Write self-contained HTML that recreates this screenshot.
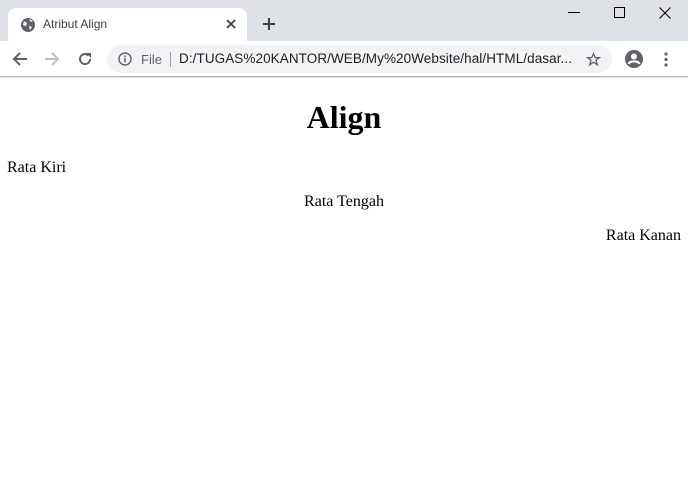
<!DOCTYPE html>
<html><head><meta charset="utf-8"><style>
*{box-sizing:border-box}
html,body{margin:0;padding:0;width:688px;height:488px;overflow:hidden;background:#fff}
#chrome{position:absolute;left:0;top:0;width:688px;height:78px;background:#dee1e6;font-family:"Liberation Sans",sans-serif}
.tab{position:absolute;left:8px;top:8px;width:239px;height:34px;background:#fff;border-radius:8px 8px 0 0}
.tab .t{position:absolute;left:35px;top:9px;font-size:12px;color:#3c4043}
.toolbar{position:absolute;left:0;top:41px;width:688px;height:36px;background:#fff;border-bottom:1px solid #b6b6b6}
.omni{position:absolute;left:107px;top:4px;width:505px;height:28px;background:#f1f3f4;border-radius:14px}
.omni .f{position:absolute;left:34px;top:7px;font-size:13px;color:#5f6368}
.omni .sep{position:absolute;left:63px;top:7px;width:1px;height:15px;background:#9aa0a6}
.omni .u{position:absolute;left:72px;top:6px;font-size:13.5px;color:#202124;letter-spacing:0.08px}
svg{position:absolute}
#page{position:absolute;top:79px;left:-1px;width:690px;font-family:"Liberation Serif",serif;color:#000}
#page .b{margin:8px}
h1{font-size:32px;margin:21.44px 0;text-align:center;line-height:37px;position:relative;top:-1px}
p{font-size:16px;margin:16px 0;line-height:18px}
</style></head><body>
<div id="chrome">
 <div class="tab">
  <svg style="left:12px;top:9px" width="16" height="16" viewBox="0 0 16 16"><circle cx="8" cy="8" r="7" fill="#5f6368"/><path d="M4 4 L7 6 L6 9 L3 8Z M9 9 L12 10 L10 13 Z M9 2 L11 5 L13 4" fill="#fff"/></svg>
  <div class="t">Atribut Align</div>
  <svg style="left:218px;top:11px" width="10" height="10" viewBox="0 0 10 10"><path d="M1 1L9 9M9 1L1 9" stroke="#3c4043" stroke-width="1.8"/></svg>
 </div>
 <svg style="left:262px;top:17px" width="14" height="14" viewBox="0 0 14 14"><path d="M7 1V13M1 7H13" stroke="#3c4043" stroke-width="2"/></svg>
 <svg style="left:568px;top:12px" width="12" height="2"><rect width="12" height="1" fill="#000"/></svg>
 <svg style="left:614px;top:7px" width="11" height="11"><rect x="0.5" y="0.5" width="10" height="10" fill="none" stroke="#000"/></svg>
 <svg style="left:659px;top:7px" width="12" height="12"><path d="M0.5 0.5L11.5 11.5M11.5 0.5L0.5 11.5" stroke="#000"/></svg>
 <div class="toolbar">
  <svg style="left:12px;top:10px" width="16" height="16" viewBox="0 0 16 16"><path d="M15 8H2M8 2L2 8L8 14" stroke="#5f6368" stroke-width="2" fill="none"/></svg>
  <svg style="left:44px;top:10px" width="16" height="16" viewBox="0 0 16 16"><path d="M1 8H14M8 2L14 8L8 14" stroke="#bdc1c6" stroke-width="2" fill="none"/></svg>
  <svg style="left:77px;top:10px" width="16" height="16" viewBox="0 0 16 16"><path d="M13 8A5 5 0 1 1 11.5 4.5" stroke="#5f6368" stroke-width="2" fill="none"/><path d="M9 2H14V7Z" fill="#5f6368"/></svg>
  <div class="omni">
   <svg style="left:11px;top:7px" width="14" height="14" viewBox="0 0 14 14"><circle cx="7" cy="7" r="6" stroke="#5f6368" stroke-width="1.4" fill="none"/><path d="M7 6V10.5M7 3.5V5" stroke="#5f6368" stroke-width="1.5"/></svg>
   <div class="f">File</div><div class="sep"></div>
   <div class="u">D:/TUGAS%20KANTOR/WEB/My%20Website/hal/HTML/dasar...</div>
   <svg style="left:479px;top:7px" width="15" height="15" viewBox="0 0 24 24"><path d="M12 2.5L14.8 9H21.5L16 13.2L18 20.5L12 16.2L6 20.5L8 13.2L2.5 9H9.2Z" stroke="#5f6368" stroke-width="2" fill="none"/></svg>
  </div>
  <svg style="left:625px;top:9px" width="18" height="18" viewBox="0 0 18 18"><circle cx="9" cy="9" r="9" fill="#5f6368"/><circle cx="9" cy="6.5" r="3" fill="#fff"/><path d="M3.5 14C5 10.5 13 10.5 14.5 14" stroke="#fff" stroke-width="2.2" fill="none"/></svg>
  <svg style="left:664px;top:11px" width="4" height="15"><circle cx="2" cy="2" r="1.6" fill="#5f6368"/><circle cx="2" cy="7.5" r="1.6" fill="#5f6368"/><circle cx="2" cy="13" r="1.6" fill="#5f6368"/></svg>
 </div>
</div>
<div id="page"><div class="b">
<h1>Align</h1>
<p style="text-align:left">Rata Kiri</p>
<p style="text-align:center">Rata Tengah</p>
<p style="text-align:right">Rata Kanan</p>
</div></div>
</body></html>
